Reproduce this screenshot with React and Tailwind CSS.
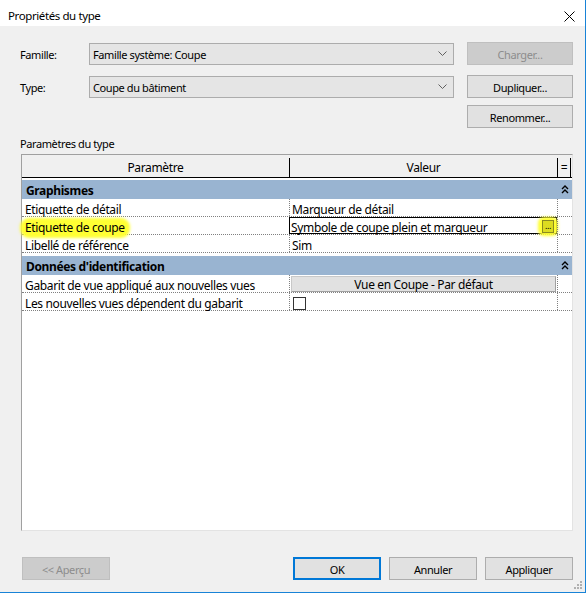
import React from 'react';

const Chevron = () => (
  <svg width="9" height="6" viewBox="0 0 9 6" className="shrink-0">
    <path d="M0.5 0.5 L4.5 4.5 L8.5 0.5" fill="none" stroke="#606060" strokeWidth="1" />
  </svg>
);

const Collapse = () => (
  <svg width="8" height="9" viewBox="0 0 8 9">
    <path d="M1 4 L4 1 L7 4 M1 8 L4 5 L7 8" fill="none" stroke="#000" strokeWidth="1.4" />
  </svg>
);

const Select = ({ value }) => (
  <div className="w-[365px] h-[22px] bg-[#e5e5e5] border border-[#acacac] flex items-center justify-between pl-[3px] pr-[6px]">
    <span className="pt-[1px]">{value}</span>
    <Chevron />
  </div>
);

const Button = ({ children, disabled, primary, className = '' }) => (
  <div
    className={`h-[23px] flex items-center justify-center pt-[1px] ${
      disabled
        ? 'bg-[#cccccc] border border-[#bfbfbf] text-[#8d8d8d]'
        : primary
        ? 'bg-[#e1e1e1] border-2 border-[#0078d7]'
        : 'bg-[#e1e1e1] border border-[#adadad]'
    } ${className}`}
  >
    {children}
  </div>
);

const GroupRow = ({ label }) => (
  <div className="h-[19px] bg-[#99b4d1] flex items-center">
    <div className="flex-1 pl-[4px] pt-[2px] font-bold">{label}</div>
    <div className="w-[14px] flex justify-center">
      <Collapse />
    </div>
  </div>
);

const Row = ({ label, children, highlight, selected }) => (
  <div className="h-[18px] flex border-b border-dotted border-[#808080]">
    <div className="w-[267px] pl-[3px] pt-[4px] flex items-center">
      {highlight ? (
        <span className="bg-[#ffff33] rounded-[5px] shadow-[0_0_3px_4px_#ffff33] -ml-[1px] px-[1px]">{label}</span>
      ) : (
        label
      )}
    </div>
    <div
      className={`w-[268px] flex items-center ${
        selected ? 'border border-black' : 'pt-[4px] border-l border-dotted border-[#808080]'
      }`}
    >
      {children}
    </div>
    <div className="w-[14px] border-l border-dotted border-[#808080]" />
  </div>
);

export default function App() {
  return (
    <div className="w-[588px] h-[595px] bg-white font-['Noto_Sans',sans-serif] text-[11px] leading-none text-black tracking-[-0.4px]">
      <div className="w-[586px] h-[593px] flex flex-col border-r border-b border-[#1883d7]">
        {/* title bar */}
        <div className="h-[32px] bg-white flex items-center justify-between pl-[8px] pr-[10px] pt-[6px]">
          <span className="text-[11.5px]">Propriétés du type</span>
          <svg width="11" height="11" viewBox="0 0 11 11">
            <path d="M0.5 0.5 L10.5 10.5 M10.5 0.5 L0.5 10.5" stroke="#000" strokeWidth="1" />
          </svg>
        </div>

        <div className="flex-1 bg-[#f0f0f0] flex flex-col pl-[20px] pt-[16px]">
          <div className="flex items-center h-[23px]">
            <span className="w-[69px] pt-[1px]">Famille:</span>
            <Select value="Famille système: Coupe" />
            <Button disabled className="w-[106px] ml-[13px]">Charger...</Button>
          </div>
          <div className="flex items-center h-[23px] mt-[10px]">
            <span className="w-[69px] pt-[1px]">Type:</span>
            <Select value="Coupe du bâtiment" />
            <Button className="w-[106px] ml-[13px]">Dupliquer...</Button>
          </div>
          <div className="flex h-[23px] mt-[7px]">
            <Button className="w-[106px] ml-[447px]">Renommer...</Button>
          </div>

          <div className="mt-[9px] h-[13px] flex items-center">Paramètres du type</div>

          {/* table */}
          <div className="mt-[4px] ml-[1px] w-[552px] h-[377px] bg-white border-t border-l border-[#a0a0a0] border-r border-b border-r-[#e3e3e3] border-b-[#e3e3e3] flex flex-col text-[12px] tracking-[-0.35px]">
            <div className="h-[23px] bg-[#f0f0f0] flex border-b border-black pt-[3px]">
              <div className="w-[267px] flex items-center justify-center">Paramètre</div>
              <div className="w-[268px] flex items-center justify-center border-l border-black">Valeur</div>
              <div className="w-[14px] flex items-center justify-center border-l border-r border-black">=</div>
            </div>
            <div className="h-[2px]" />
            <GroupRow label="Graphismes" />
            <Row label="Etiquette de détail">
              <span className="pl-[2px]">Marqueur de détail</span>
            </Row>
            <Row label="Etiquette de coupe" highlight selected>
              <div className="flex-1 flex items-center justify-between pl-[1px] pr-[1px]">
                <span className="pt-[4px]">Symbole de coupe plein et marqueur</span>
                <span className="bg-[#ffff33] rounded-[3px] shadow-[0_0_3px_3px_#ffff33] px-[1px] mt-[2px]">
                  <span className="w-[12px] h-[13px] bg-[#dcdc20] border border-[#8a8a20] flex items-center justify-center text-[9px] leading-none pb-[3px]">
                    ...
                  </span>
                </span>
              </div>
            </Row>
            <Row label="Libellé de référence">
              <span className="pl-[2px]">Sim</span>
            </Row>
            <div className="h-[3px]" />
            <GroupRow label="Données d'identification" />
            <Row label="Gabarit de vue appliqué aux nouvelles vues">
              <div className="flex-1 mx-[1px] -mt-[3px] h-[16px] bg-[#e1e1e1] border border-[#c8c8c8] border-b-[#a0a0a0] border-r-[#a0a0a0] flex items-center justify-center pt-[2px]">
                Vue en Coupe - Par défaut
              </div>
            </Row>
            <Row label="Les nouvelles vues dépendent du gabarit">
              <div className="ml-[3px] w-[13px] h-[13px] border border-[#333333] bg-white" />
            </Row>
          </div>

          {/* bottom buttons */}
          <div className="mt-[26px] flex h-[23px]">
            <Button disabled className="w-[88px] ml-[2px]">{'<< Aperçu'}</Button>
            <Button primary className="w-[88px] ml-[183px]">OK</Button>
            <Button className="w-[88px] ml-[8px]">Annuler</Button>
            <Button className="w-[88px] ml-[8px]">Appliquer</Button>
          </div>
          <div className="flex-1 flex justify-end items-end pr-[2px] pb-[2px]">
            <svg width="10" height="10" viewBox="0 0 10 10">
              <rect x="7" y="1" width="2" height="2" fill="#b0b0b0" />
              <rect x="4" y="4" width="2" height="2" fill="#b0b0b0" />
              <rect x="7" y="4" width="2" height="2" fill="#b0b0b0" />
              <rect x="1" y="7" width="2" height="2" fill="#b0b0b0" />
              <rect x="4" y="7" width="2" height="2" fill="#b0b0b0" />
              <rect x="7" y="7" width="2" height="2" fill="#b0b0b0" />
            </svg>
          </div>
        </div>
      </div>
    </div>
  );
}
